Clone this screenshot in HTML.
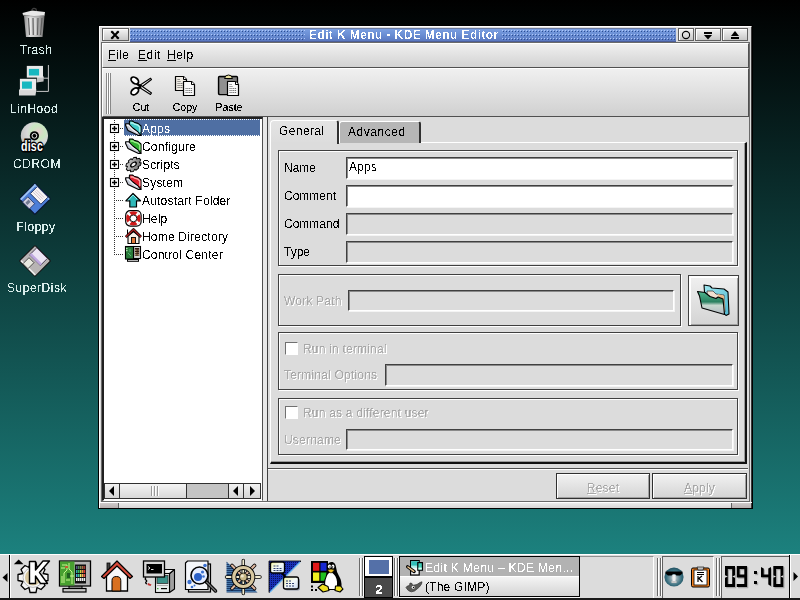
<!DOCTYPE html>
<html><head><meta charset="utf-8">
<style>
*{margin:0;padding:0;box-sizing:border-box}
html,body{width:800px;height:600px;overflow:hidden}
body{position:relative;background:linear-gradient(to bottom,#000 0px,#1c817e 554px);font-family:"Liberation Sans",sans-serif;font-size:12px;color:#000}
.a{position:absolute}
.dl{position:absolute;color:#d8ecea;font-size:12px;white-space:nowrap;text-align:center;width:80px;line-height:14px;letter-spacing:0.5px;filter:url(#crisp)}
.win{position:absolute;left:99px;top:26px;width:653px;height:482px;background:#dcdcdc;border-left:1px solid #fff;border-top:1px solid #fff;border-right:1px solid #000;border-bottom:1px solid #000}
.tb{position:absolute;background:linear-gradient(#f4f4f4,#c8c8c8);border:1px solid #555}
.t{position:absolute;white-space:nowrap;line-height:14px;letter-spacing:0.2px;filter:url(#crisp)}
.grad{background:linear-gradient(#ececec,#d4d4d4)}
.fld{position:absolute;border-top:1px solid #404040;border-left:1px solid #404040;border-bottom:1px solid #fff;border-right:1px solid #fff;background:#dcdcdc;box-shadow:inset 1px 1px 0 #8a8a8a,1px 1px 0 #f4f4f4}
.fld.w{background:#fff}
.grp{position:absolute;border:1px solid #404040;box-shadow:inset 1px 1px 0 #fff,1px 1px 0 #fff}
.dis{color:#a8a8a8;text-shadow:1px 1px 0 #fff}
</style></head><body>
<svg width="0" height="0" style="position:absolute"><filter id="crisp" x="0" y="0" width="100%" height="100%"><feComponentTransfer><feFuncA type="discrete" tableValues="0 0 1 1"/></feComponentTransfer></filter><filter id="crisp2" x="0" y="0" width="100%" height="100%"><feComponentTransfer><feFuncA type="discrete" tableValues="0 1 1"/></feComponentTransfer></filter><filter id="crisp3" x="0" y="0" width="100%" height="100%"><feComponentTransfer><feFuncA type="discrete" tableValues="0 0 0 1 1"/></feComponentTransfer></filter><filter id="crisp4" x="0" y="0" width="100%" height="100%"><feComponentTransfer><feFuncA type="discrete" tableValues="0 0 1 1 1"/></feComponentTransfer></filter></svg>


<!-- desktop icons -->
<svg class="a" style="left:19px;top:4px" width="30" height="36" viewBox="0 0 30 36">
<defs><linearGradient id="tg" x1="0" x2="1"><stop offset="0" stop-color="#909090"/><stop offset="0.3" stop-color="#e0e0e0"/><stop offset="0.7" stop-color="#b0b0b0"/><stop offset="1" stop-color="#707070"/></linearGradient></defs>
<path d="M5 12 L25.5 12 L23.5 33 L7 33 Z" fill="url(#tg)"/>
<path d="M9.5 14 L10.5 31 M14 14 L14.3 31 M19 14 L18.5 31 M23 14 L21.5 31" stroke="#606060" stroke-width="1.2"/><path d="M11 14 L11.8 31 M16 14 L16.2 31" stroke="#f0f0f0" stroke-width="0.8"/>
<path d="M3.5 9 L13 6.5 L26 8 L25.5 11.5 L15 12.5 L4 11 Z" fill="#e8e8e8"/>
<path d="M4 11 L15 12.5 L25.5 11.5" stroke="#a0a0a0" stroke-width="0.8" fill="none"/>
<path d="M12.5 6.5 Q14.5 3 17 5 L17.5 7" stroke="#404040" stroke-width="1.2" fill="none"/>
</svg>

<svg class="a" style="left:16px;top:62px" width="36" height="36" viewBox="0 0 36 36">
<path d="M32.4 3 L32.4 29.4 L20.4 29.4 M27.6 16.2 L32.4 16.2" stroke="#c8c8c8" stroke-width="1" fill="none"/>
<path d="M21 14.5 L28 14.5 L27.5 19.5 L20.5 20.5 Z" fill="#c0c0c0"/>
<rect x="10.8" y="3.9" width="16.2" height="11.7" fill="#e8e8e8"/>
<rect x="12.9" y="6.9" width="10.2" height="6.6" fill="#18b8c0"/>
<path d="M3 27.6 L20.4 27.6 L19.5 33.6 L3 33.6 Z" fill="#d8d8d8"/>
<rect x="3.9" y="16.8" width="16.2" height="11.4" fill="#ececec"/>
<rect x="6" y="19.5" width="9.9" height="7.2" fill="#18b8c0"/>
</svg>

<svg class="a" style="left:17px;top:119px" width="36" height="36" viewBox="0 0 36 36">
<defs><radialGradient id="cdg" cx="0.65" cy="0.35" r="0.7"><stop offset="0" stop-color="#e8d0d0"/><stop offset="0.35" stop-color="#c8e8c0"/><stop offset="0.6" stop-color="#d8d8d8"/><stop offset="1" stop-color="#c0c0c0"/></radialGradient></defs>
<circle cx="17.4" cy="16.8" r="13.6" fill="url(#cdg)"/>
<circle cx="17.4" cy="16.8" r="4.6" fill="#000"/>
<circle cx="17.4" cy="16.8" r="2.4" fill="none" stroke="#fff" stroke-width="0.9"/>
<g transform="translate(15,31.8) scale(0.85,1.15)"><text x="0" y="0" text-anchor="middle" font-family="Liberation Sans" font-weight="bold" font-size="12.5" fill="#fff" stroke="#000" stroke-width="2.4" paint-order="stroke" letter-spacing="0.2">disc</text></g>
</svg>

<svg class="a" style="left:17px;top:181px" width="36" height="36" viewBox="0 0 36 36">
<g transform="translate(17.9,17.9) rotate(45)">
<rect x="-11" y="-11" width="22" height="22" rx="1" fill="#4c7ed8" stroke="#0a1830" stroke-width="1.2"/>
<rect x="-10.5" y="-10.5" width="1.8" height="21" fill="#a0c4f4"/><rect x="-10.5" y="-10.5" width="21" height="1.5" fill="#90b8f0"/>
<rect x="-7" y="-10.5" width="15" height="10" fill="#f8f4f4" stroke="#203060" stroke-width="0.9"/>
<path d="M-6 -7.5 L5.5 -7.5 M-6 -5.5 L5.5 -5.5 M-6 -3.5 L5.5 -3.5" stroke="#c0a8b8" stroke-width="0.6"/>
<rect x="-6.5" y="3.6" width="9.7" height="7.4" fill="#d0d0e0" stroke="#203060" stroke-width="0.8"/>
<rect x="-4" y="5" width="3" height="4.5" fill="#707890"/>
</g>
</svg>

<svg class="a" style="left:17px;top:243px" width="36" height="36" viewBox="0 0 36 36">
<g transform="translate(18,17.9) rotate(45)">
<rect x="-11" y="-11" width="22" height="22" rx="1" fill="#b8b4b4" stroke="#101010" stroke-width="1"/>
<rect x="-10" y="9" width="20" height="1.5" fill="#f0f0f0"/>
<rect x="-8" y="-10.5" width="15" height="10" fill="#ece4f4" stroke="#302840" stroke-width="0.8"/>
<rect x="-8" y="-3" width="15" height="2.5" fill="#c0a8e0"/>
<rect x="-6.5" y="2" width="7" height="8.5" fill="#e8e8e0" stroke="#202020" stroke-width="0.7"/>
</g>
</svg>

<!-- desktop labels -->
<div class="dl" style="left:-4px;top:43px">Trash</div>
<div class="dl" style="left:-6px;top:102px">LinHood</div>
<div class="dl" style="left:-3px;top:157px">CDROM</div>
<div class="dl" style="left:-4px;top:220px">Floppy</div>
<div class="dl" style="left:-3px;top:281px">SuperDisk</div>

<!-- window -->

<!-- window frame -->
<div class="a" style="left:98px;top:25px;width:655px;height:484px;background:#000"></div>
<div class="a" style="left:99px;top:26px;width:653px;height:482px;background:#dcdcdc;border-left:1px solid #fff;border-top:1px solid #fff;border-right:1px solid #3a3a3a"></div>
<!-- grips bottom -->
<div class="a" style="left:99px;top:502px;width:653px;height:1px;background:#fff"></div>
<div class="a" style="left:100px;top:503px;width:651px;height:5px;background:linear-gradient(#ececec,#d8d6d6)"></div>
<div class="a" style="left:100px;top:503px;width:18px;height:5px;background:linear-gradient(#d0cccc,#b8b0b0)"></div>
<div class="a" style="left:732px;top:503px;width:19px;height:5px;background:linear-gradient(#d0cccc,#b8b0b0)"></div>
<div class="a" style="left:118px;top:503px;width:1px;height:5px;background:#606060"></div>
<div class="a" style="left:731px;top:503px;width:1px;height:5px;background:#606060"></div>
<!-- title row -->
<div class="tb" style="left:102px;top:28px;width:27px;height:13px;border-color:#606060;box-shadow:inset 1px 1px 0 #fff"></div>
<svg class="a" style="left:109px;top:29px" width="12" height="11" viewBox="0 0 12 11"><path d="M3 3 L9 9 M9 3 L3 9" stroke="#000" stroke-width="2" stroke-linecap="square"/><path d="M2.5 2.5 h2 v1 h-2z M7.5 2.5 h2 v1 h-2z M2.5 8.5 h2 v1 h-2z M7.5 8.5 h2 v1 h-2z" fill="#000"/></svg>
<div class="a" style="left:130px;top:28px;width:546px;height:14px;background:linear-gradient(#7a9ee0,#6a8ed4 50%,#5a78c0);border-top:1px solid #6a7aa0;border-bottom:1px solid #4c5e98"></div>
<svg class="a" style="left:130px;top:28px" width="546" height="14"><defs><pattern id="dots" x="0" y="0" width="3" height="4" patternUnits="userSpaceOnUse"><rect x="1" y="3" width="1" height="1" fill="#2c4c90"/><rect x="0" y="2" width="1" height="1" fill="#b0c8f8"/></pattern></defs><rect y="1" width="546" height="12" fill="url(#dots)"/></svg>
<div class="a" style="left:305px;top:29px;width:197px;height:12px;background:linear-gradient(#7a9ee0,#6a8ed4 50%,#5a78c0)"></div>
<div class="t" style="left:309px;top:28px;color:#fff;font-weight:bold;font-size:12px;letter-spacing:0.4px;filter:url(#crisp3)">Edit K Menu - KDE Menu Editor</div>
<div class="tb" style="left:678px;top:28px;width:16px;height:13px;border-color:#606060;box-shadow:inset 1px 1px 0 #fff"></div>
<svg class="a" style="left:681px;top:30px" width="10" height="10"><circle cx="5" cy="5" r="3.6" fill="none" stroke="#000" stroke-width="1.1"/></svg>
<div class="tb" style="left:695px;top:28px;width:26px;height:13px;border-color:#606060;box-shadow:inset 1px 1px 0 #fff"></div>
<svg class="a" style="left:701px;top:30px" width="14" height="10"><rect x="3" y="2" width="8" height="2" fill="#000"/><path d="M3 5 L11 5 L7 9.5 Z" fill="#000"/></svg>
<div class="tb" style="left:722px;top:28px;width:26px;height:13px;border-color:#606060;box-shadow:inset 1px 1px 0 #fff"></div>
<svg class="a" style="left:728px;top:30px" width="14" height="10"><path d="M3 6 L11 6 L7 1 Z" fill="#000"/><rect x="3" y="7" width="8" height="2" fill="#000"/></svg>

<!-- client frame -->
<div class="a" style="left:101px;top:42px;width:649px;height:460px;border:1px solid #6a6a6a;border-right-color:#6a6a6a;border-bottom-color:#6a6a6a"></div>

<!-- menubar -->
<div class="a grad" style="left:102px;top:43px;width:647px;height:25px;border-top:1px solid #fff;border-left:1px solid #fff;border-bottom:1px solid #505050;border-right:1px solid #505050;background:linear-gradient(#f0f0f0,#d2d2d2)"></div>
<div class="t" style="left:108px;top:48px;letter-spacing:0.5px"><u>F</u>ile</div>
<div class="t" style="left:138px;top:48px;letter-spacing:0.5px"><u>E</u>dit</div>
<div class="t" style="left:167px;top:48px;letter-spacing:0.5px"><u>H</u>elp</div>

<!-- toolbar -->
<div class="a" style="left:102px;top:68px;width:647px;height:49px;border-top:1px solid #fff;border-left:1px solid #fff;border-bottom:1px solid #505050;border-right:1px solid #505050;background:linear-gradient(#f0f0f0,#d0d0d0)"></div>
<div class="a" style="left:106px;top:73px;width:1px;height:41px;background:#888"></div>
<div class="a" style="left:107px;top:73px;width:1px;height:41px;background:#fff"></div>
<div class="a" style="left:108px;top:73px;width:1px;height:41px;background:#888"></div>
<div class="a" style="left:109px;top:73px;width:1px;height:41px;background:#fff"></div>
<div class="a" style="left:110px;top:73px;width:1px;height:41px;background:#888"></div>
<div class="t" style="left:121px;top:100px;width:40px;text-align:center;font-size:10.5px;letter-spacing:0;filter:url(#crisp4)">Cut</div>
<div class="t" style="left:165px;top:100px;width:40px;text-align:center;font-size:10.5px;letter-spacing:0;filter:url(#crisp4)">Copy</div>
<div class="t" style="left:209px;top:100px;width:40px;text-align:center;font-size:10.5px;letter-spacing:0;filter:url(#crisp4)">Paste</div>


<!-- toolbar icons -->
<svg class="a" style="left:126px;top:72px" width="30" height="28" viewBox="0 0 30 28">
<path d="M13.5 13.5 L24.5 6.2 L25.5 7.5 L15 15.5 Z" fill="#fff" stroke="#000" stroke-width="1.1" stroke-linejoin="round"/>
<path d="M13.5 15.5 L24.5 22.5 L25.5 21 L15 13.5 Z" fill="#fff" stroke="#000" stroke-width="1.1" stroke-linejoin="round"/>
<path d="M15 14.5 L10.5 11.5" stroke="#000" stroke-width="2.5"/>
<path d="M15 14.5 L10.5 17.5" stroke="#000" stroke-width="2.5"/>
<ellipse cx="8.8" cy="8.5" rx="4.2" ry="2.8" transform="rotate(38 8.8 8.5)" fill="#fff" stroke="#000" stroke-width="1.8"/>
<ellipse cx="8.8" cy="19.4" rx="4.2" ry="2.8" transform="rotate(-38 8.8 19.4)" fill="#fff" stroke="#000" stroke-width="1.8"/>
</svg>
<svg class="a" style="left:170px;top:72px" width="30" height="28" viewBox="0 0 30 28">
<path d="M5.5 4.5 L13.5 4.5 L16.5 7.5 L16.5 18.5 L5.5 18.5 Z" fill="#f0ece4" stroke="#000" stroke-width="1.2" stroke-linejoin="round"/>
<path d="M13.5 4.5 L13.5 7.5 L16.5 7.5" fill="#fff" stroke="#000" stroke-width="1"/>
<path d="M7.5 7.5 H10 M7.5 9.5 H10.5 M7.5 11.5 H14.5 M7.5 13.5 H14.5 M7.5 15.5 H14.5" stroke="#505050" stroke-width="0.8" stroke-dasharray="1.2 0.6"/>
<path d="M13.5 9.5 L21.5 9.5 L24.5 12.5 L24.5 23.5 L13.5 23.5 Z" fill="#fafafa" stroke="#000" stroke-width="1.2" stroke-linejoin="round"/>
<path d="M21.5 9.5 L21.5 12.5 L24.5 12.5" fill="#fff" stroke="#000" stroke-width="1"/>
<path d="M15.5 16.5 H22.5 M15.5 18.5 H22.5 M15.5 20.5 H22.5" stroke="#505050" stroke-width="0.8" stroke-dasharray="1.2 0.6"/>
</svg>
<svg class="a" style="left:214px;top:72px" width="30" height="28" viewBox="0 0 30 28">
<rect x="4.5" y="4.5" width="19" height="18" rx="1" fill="#7a7a7a" stroke="#000" stroke-width="1.3"/>
<rect x="6" y="6" width="7" height="16" fill="#909090"/>
<path d="M10.5 6.5 Q11 3 14.5 3 Q18 3 18.5 6.5 Z" fill="#e8e0a0" stroke="#000" stroke-width="1"/>
<path d="M13.5 9.5 L21.5 9.5 L24.5 12.5 L24.5 23.5 L13.5 23.5 Z" fill="#fafafa" stroke="#000" stroke-width="1.2" stroke-linejoin="round"/>
<path d="M21.5 9.5 L21.5 12.5 L24.5 12.5" fill="#fff" stroke="#000" stroke-width="1"/>
<path d="M15.5 12.5 H18 M15.5 14.5 H18.5 M15.5 16.5 H22.5 M15.5 18.5 H22.5 M15.5 20.5 H22.5" stroke="#505050" stroke-width="0.8" stroke-dasharray="1.2 0.6"/>
</svg>

<!-- tree view -->
<div class="a" style="left:102px;top:117px;width:161px;height:384px;background:#fff;border-top:2px solid #202020;border-left:2px solid #202020;border-right:1px solid #505050;border-bottom:1px solid #fff"></div>
<div class="a" style="left:124px;top:119px;width:136px;height:17px;background:#4f6fa3"></div>
<div class="a" style="left:124px;top:119px;width:136px;height:1px;background:repeating-linear-gradient(90deg,#fff 0 1px,#4f6fa3 1px 2px)"></div><div class="a" style="left:124px;top:135px;width:136px;height:1px;background:repeating-linear-gradient(90deg,#fff 0 1px,#4f6fa3 1px 2px)"></div>
<div class="t" style="left:142px;top:122px;color:#fff">Apps</div>
<div class="t" style="left:142px;top:140px">Configure</div>
<div class="t" style="left:142px;top:158px">Scripts</div>
<div class="t" style="left:142px;top:176px">System</div>
<div class="t" style="left:142px;top:194px">Autostart Folder</div>
<div class="t" style="left:142px;top:212px">Help</div>
<div class="t" style="left:142px;top:230px">Home Directory</div>
<div class="t" style="left:142px;top:248px">Control Center</div>


<!-- tree lines & icons -->
<svg class="a" style="left:104px;top:119px" width="40" height="144" viewBox="0 0 40 144">
<g fill="#303030">
<rect x="10" y="1" width="1" height="1"/><rect x="10" y="3" width="1" height="1"/><rect x="10" y="15" width="1" height="1"/><rect x="10" y="17" width="1" height="1"/><rect x="10" y="19" width="1" height="1"/><rect x="10" y="21" width="1" height="1"/><rect x="10" y="33" width="1" height="1"/><rect x="10" y="35" width="1" height="1"/><rect x="10" y="37" width="1" height="1"/><rect x="10" y="39" width="1" height="1"/><rect x="10" y="51" width="1" height="1"/><rect x="10" y="53" width="1" height="1"/><rect x="10" y="55" width="1" height="1"/><rect x="10" y="57" width="1" height="1"/><rect x="10" y="69" width="1" height="1"/><rect x="10" y="71" width="1" height="1"/><rect x="10" y="73" width="1" height="1"/><rect x="10" y="75" width="1" height="1"/><rect x="10" y="77" width="1" height="1"/><rect x="10" y="79" width="1" height="1"/><rect x="10" y="81" width="1" height="1"/><rect x="10" y="83" width="1" height="1"/><rect x="10" y="85" width="1" height="1"/><rect x="10" y="87" width="1" height="1"/><rect x="10" y="89" width="1" height="1"/><rect x="10" y="91" width="1" height="1"/><rect x="10" y="93" width="1" height="1"/><rect x="10" y="95" width="1" height="1"/><rect x="10" y="97" width="1" height="1"/><rect x="10" y="99" width="1" height="1"/><rect x="10" y="101" width="1" height="1"/><rect x="10" y="103" width="1" height="1"/><rect x="10" y="105" width="1" height="1"/><rect x="10" y="107" width="1" height="1"/><rect x="10" y="109" width="1" height="1"/><rect x="10" y="111" width="1" height="1"/><rect x="10" y="113" width="1" height="1"/><rect x="10" y="115" width="1" height="1"/><rect x="10" y="117" width="1" height="1"/><rect x="10" y="119" width="1" height="1"/><rect x="10" y="121" width="1" height="1"/><rect x="10" y="123" width="1" height="1"/><rect x="10" y="125" width="1" height="1"/><rect x="10" y="127" width="1" height="1"/><rect x="10" y="129" width="1" height="1"/><rect x="10" y="131" width="1" height="1"/><rect x="10" y="133" width="1" height="1"/><rect x="10" y="135" width="1" height="1"/><rect x="16" y="9" width="1" height="1"/><rect x="18" y="9" width="1" height="1"/><rect x="16" y="27" width="1" height="1"/><rect x="18" y="27" width="1" height="1"/><rect x="16" y="45" width="1" height="1"/><rect x="18" y="45" width="1" height="1"/><rect x="16" y="63" width="1" height="1"/><rect x="18" y="63" width="1" height="1"/><rect x="12" y="81" width="1" height="1"/><rect x="14" y="81" width="1" height="1"/><rect x="16" y="81" width="1" height="1"/><rect x="18" y="81" width="1" height="1"/><rect x="12" y="99" width="1" height="1"/><rect x="14" y="99" width="1" height="1"/><rect x="16" y="99" width="1" height="1"/><rect x="18" y="99" width="1" height="1"/><rect x="12" y="117" width="1" height="1"/><rect x="14" y="117" width="1" height="1"/><rect x="16" y="117" width="1" height="1"/><rect x="18" y="117" width="1" height="1"/><rect x="12" y="135" width="1" height="1"/><rect x="14" y="135" width="1" height="1"/><rect x="16" y="135" width="1" height="1"/><rect x="18" y="135" width="1" height="1"/></g>
<rect x="6.5" y="5.5" width="8" height="8" fill="#fff" stroke="#000" stroke-width="1.1"/><path d="M8 9.5 H13 M10.5 7 V12" stroke="#000" stroke-width="1.4"/>
<rect x="6.5" y="23.5" width="8" height="8" fill="#fff" stroke="#000" stroke-width="1.1"/><path d="M8 27.5 H13 M10.5 25 V30" stroke="#000" stroke-width="1.4"/>
<rect x="6.5" y="41.5" width="8" height="8" fill="#fff" stroke="#000" stroke-width="1.1"/><path d="M8 45.5 H13 M10.5 43 V48" stroke="#000" stroke-width="1.4"/>
<rect x="6.5" y="59.5" width="8" height="8" fill="#fff" stroke="#000" stroke-width="1.1"/><path d="M8 63.5 H13 M10.5 61 V66" stroke="#000" stroke-width="1.4"/>
</svg>
<svg class="a" style="left:125px;top:120px" width="17" height="17" viewBox="0 0 17 17">
<path d="M4.5 1 L7.5 1 L9 2.2 L13 3.4 L16 6 L16 15.5 L4 8 Z" fill="#40c8c8" stroke="#000" stroke-width="1.1" stroke-linejoin="round"/>
<path d="M5.5 3 L8 3 L9.5 4.2 L13 5.2 L14.8 7 L14.8 12" stroke="#b8f4f4" stroke-width="1.3" fill="none"/>
<path d="M0.6 3.8 L3.8 3.8 L7.5 7.8 L13 12 L15.8 15.5 L13.5 15.5 L3 10.5 L0.6 5.5 Z" fill="#c4c8d4" stroke="#000" stroke-width="1.1" stroke-linejoin="round"/>
<path d="M2 5.4 L3.5 5.4 L7.5 9.5 L12.5 13" stroke="#f4f4f8" stroke-width="1.2" fill="none"/>
</svg>
<svg class="a" style="left:125px;top:138px" width="17" height="17" viewBox="0 0 17 17">
<path d="M4.5 1 L7.5 1 L9 2.2 L13 3.4 L16 6 L16 15.5 L4 8 Z" fill="#30b030" stroke="#000" stroke-width="1.1" stroke-linejoin="round"/>
<path d="M5.5 3 L8 3 L9.5 4.2 L13 5.2 L14.8 7 L14.8 12" stroke="#a0f090" stroke-width="1.3" fill="none"/>
<path d="M0.6 3.8 L3.8 3.8 L7.5 7.8 L13 12 L15.8 15.5 L13.5 15.5 L3 10.5 L0.6 5.5 Z" fill="#c4c8d4" stroke="#000" stroke-width="1.1" stroke-linejoin="round"/>
<path d="M2 5.4 L3.5 5.4 L7.5 9.5 L12.5 13" stroke="#f4f4f8" stroke-width="1.2" fill="none"/>
</svg>
<svg class="a" style="left:125px;top:156px" width="17" height="17" viewBox="0 0 17 17">
<defs><linearGradient id="gg" x1="0" y1="0" x2="1" y2="1"><stop offset="0" stop-color="#d8d8d8"/><stop offset="0.5" stop-color="#a0a0a0"/><stop offset="1" stop-color="#606060"/></linearGradient></defs>
<g transform="translate(8.5,8.5) rotate(-40) scale(1,0.72)">
<path d="M-1.6,-8.4 L1.6,-8.4 L2.3,-6.3 L4.7,-7.3 L6.9,-5.2 L6,-3.1 L8.4,-1.6 L8.4,1.6 L6,3.1 L6.9,5.2 L4.7,7.3 L2.3,6.3 L1.6,8.4 L-1.6,8.4 L-2.3,6.3 L-4.7,7.3 L-6.9,5.2 L-6,3.1 L-8.4,1.6 L-8.4,-1.6 L-6,-3.1 L-6.9,-5.2 L-4.7,-7.3 L-2.3,-6.3 Z" fill="url(#gg)" stroke="#000" stroke-width="1.1"/>
<ellipse rx="3.2" ry="2.6" fill="#f0f0f0" stroke="#000" stroke-width="1.5"/>
</g></svg>
<svg class="a" style="left:125px;top:174px" width="17" height="17" viewBox="0 0 17 17">
<path d="M4.5 1 L7.5 1 L9 2.2 L13 3.4 L16 6 L16 15.5 L4 8 Z" fill="#e02030" stroke="#000" stroke-width="1.1" stroke-linejoin="round"/>
<path d="M5.5 3 L8 3 L9.5 4.2 L13 5.2 L14.8 7 L14.8 12" stroke="#ffb0b0" stroke-width="1.3" fill="none"/>
<path d="M0.6 3.8 L3.8 3.8 L7.5 7.8 L13 12 L15.8 15.5 L13.5 15.5 L3 10.5 L0.6 5.5 Z" fill="#c4c8d4" stroke="#000" stroke-width="1.1" stroke-linejoin="round"/>
<path d="M2 5.4 L3.5 5.4 L7.5 9.5 L12.5 13" stroke="#f4f4f8" stroke-width="1.2" fill="none"/>
</svg>
<svg class="a" style="left:125px;top:192px" width="17" height="17" viewBox="0 0 17 17">
<path d="M0.8 8.8 L8 1.5 L15.5 8.8 L11.5 8.8 L11.5 15 L4.8 15 L4.8 8.8 Z" fill="#30b8b8" stroke="#000" stroke-width="1.2" stroke-linejoin="round"/>
<path d="M3 8.5 L8 3 L12 7" stroke="#90f0f0" stroke-width="1" fill="none"/>
</svg>
<svg class="a" style="left:125px;top:210px" width="17" height="17" viewBox="0 0 17 17">
<rect x="0.7" y="0.7" width="15.4" height="15.4" rx="4.5" fill="#fff" stroke="#000" stroke-width="1.2"/>
<circle cx="8.4" cy="8.4" r="5.4" fill="none" stroke="#d01818" stroke-width="3.6"/>
<g stroke="#fff" stroke-width="2.4"><path d="M3.2 3.2 L5.4 5.4 M13.6 3.2 L11.4 5.4 M3.2 13.6 L5.4 11.4 M13.6 13.6 L11.4 11.4"/></g>
<circle cx="8.4" cy="8.4" r="3.4" fill="#fff" stroke="#000" stroke-width="0.9"/>
</svg>
<svg class="a" style="left:125px;top:228px" width="17" height="17" viewBox="0 0 17 17">
<path d="M3 8 L8.5 3.5 L14 8 L14 15.5 L3 15.5 Z" fill="#f8f0e8" stroke="#000" stroke-width="1.1"/>
<path d="M0.8 9 L8.5 1.5 L16 9" stroke="#000" stroke-width="2.6" fill="none" stroke-linejoin="round"/>
<path d="M0.8 9 L8.5 1.5 L16 9" stroke="#b02020" stroke-width="1.3" fill="none" stroke-linejoin="round"/>
<path d="M2.5 1.5 V6" stroke="#000" stroke-width="1"/>
<rect x="6.5" y="9.5" width="4" height="6" fill="#e07838" stroke="#000" stroke-width="0.9"/>
</svg>
<svg class="a" style="left:122px;top:244px" width="22" height="22" viewBox="0 0 22 22">
<rect x="5.5" y="15.5" width="11" height="1.8" fill="#e8e8e8" stroke="#000" stroke-width="1"/>
<rect x="11.5" y="2.5" width="7" height="12" fill="#d8d8d8" stroke="#000" stroke-width="1.1"/>
<rect x="12.8" y="4" width="4.4" height="8" fill="#301810"/>
<g fill="#f0d0a0"><rect x="13.2" y="5.5" width="1.3" height="1.3"/><rect x="15.5" y="5.5" width="1.3" height="1.3" fill="#a08060"/><rect x="13.2" y="8" width="1.3" height="1.3"/><rect x="15.5" y="8" width="1.3" height="1.3" fill="#a08060"/><rect x="13.2" y="10.2" width="1.3" height="1.3"/><rect x="15.5" y="10.2" width="1.3" height="1.3"/></g>
<rect x="3.5" y="2.5" width="8" height="12.5" fill="#2a7a3a" stroke="#000" stroke-width="1.1"/>
<circle cx="4.8" cy="4.5" r="0.8" fill="#c0f0c0"/><circle cx="4.8" cy="6.6" r="0.8" fill="#c0f0c0"/>
<path d="M6 9 L9 12 M8 5 L8 8" stroke="#60c080" stroke-width="0.9"/>
</svg>

<!-- splitter -->
<div class="a" style="left:263px;top:117px;width:5px;height:384px;background:#e8e8e8;border-right:1px solid #404040"></div>

<!-- right panel -->
<div class="a" style="left:268px;top:117px;width:481px;height:384px;background:#dcdcdc"></div>
<!-- tab page -->
<div class="a" style="left:270px;top:142px;width:477px;height:322px;border-left:1px solid #fff;border-top:1px solid #fff;border-right:2px solid #101010;border-bottom:2px solid #101010;box-shadow:inset -1px -1px 0 #9a9a9a"></div>
<!-- advanced tab -->
<div class="a" style="left:339px;top:121px;width:82px;height:22px;background:#b6b6b6;border-top:1px solid #fff;border-left:1px solid #fff;border-right:2px solid #303030;border-radius:3px 3px 0 0"></div>
<div class="t" style="left:348px;top:125px;letter-spacing:0.55px">Advanced</div>
<!-- general tab -->
<div class="a" style="left:270px;top:120px;width:69px;height:24px;background:linear-gradient(#e4e4e4,#dcdcdc);border-top:1px solid #fff;border-left:1px solid #fff;border-right:2px solid #303030;border-radius:4px 3px 0 0"></div>
<div class="a" style="left:271px;top:142px;width:66px;height:2px;background:#dcdcdc"></div>
<div class="t" style="left:279px;top:124px;letter-spacing:0.4px">General</div>

<!-- group 1 -->
<div class="grp" style="left:278px;top:150px;width:460px;height:116px"></div>
<div class="t" style="left:284px;top:161px;letter-spacing:0">Name</div>
<div class="t" style="left:284px;top:189px;letter-spacing:0">Comment</div>
<div class="t" style="left:284px;top:217px;letter-spacing:0">Command</div>
<div class="t" style="left:284px;top:245px;letter-spacing:0">Type</div>
<div class="fld w" style="left:346px;top:157px;width:387px;height:22px"></div>
<div class="t" style="left:349px;top:160px">Apps</div>
<div class="fld w" style="left:346px;top:185px;width:387px;height:22px"></div>
<div class="fld" style="left:346px;top:213px;width:387px;height:22px"></div>
<div class="fld" style="left:346px;top:241px;width:387px;height:22px"></div>

<!-- group work path -->
<div class="grp" style="left:278px;top:274px;width:403px;height:52px"></div>
<div class="t dis" style="left:284px;top:294px">Work Path</div>
<div class="fld" style="left:348px;top:290px;width:326px;height:21px"></div>
<div class="a" style="left:688px;top:275px;width:51px;height:51px;border:1px solid #404040;box-shadow:inset 2px 2px 0 #fff,inset -1px -1px 0 #a0a0a0;background:linear-gradient(#f0f0f0,#d4d4d4)"></div>

<svg class="a" style="left:680px;top:270px" width="60" height="56" viewBox="0 0 60 56">
<defs><linearGradient id="fflap" x1="0" y1="0" x2="0" y2="1"><stop offset="0" stop-color="#50b890"/><stop offset="0.45" stop-color="#2a8060"/><stop offset="0.6" stop-color="#c8d8d0"/><stop offset="1" stop-color="#b0b8c0"/></linearGradient>
<linearGradient id="fback" x1="0" y1="0" x2="1" y2="1"><stop offset="0" stop-color="#a0e8f0"/><stop offset="1" stop-color="#50b8d0"/></linearGradient></defs>
<path d="M24 15 L30 16 L32 18 L44 19 L48 22 L49 44 L46 45.5 L24.5 22 Z" fill="url(#fback)" stroke="#000" stroke-width="1.1" stroke-linejoin="round"/>
<path d="M27 21 L33 21 L36 24 L44 25 L45 42 L28 34 Z" fill="#f0e0d0" stroke="#303030" stroke-width="0.7"/>
<path d="M38 24 L44 26 L45 42 L40 40 Z" fill="#e8b888"/>
<path d="M17.5 21.5 L25 22.5 L30 26.5 L36 28.5 L38 27 L43 29 L44.5 44.5 L22 38 L19.5 26 Z" fill="url(#fflap)" stroke="#000" stroke-width="1.1" stroke-linejoin="round"/>
</svg>

<!-- group run in terminal -->
<div class="grp" style="left:278px;top:332px;width:460px;height:58px"></div>
<div class="a" style="left:285px;top:342px;width:13px;height:13px;border-top:1px solid #707070;border-left:1px solid #707070;border-right:1px solid #fff;border-bottom:1px solid #fff;background:#fff"></div>
<div class="t dis" style="left:303px;top:342px">Run in terminal</div>
<div class="t dis" style="left:284px;top:368px">Terminal Options</div>
<div class="fld" style="left:385px;top:364px;width:348px;height:22px"></div>

<!-- group run as user -->
<div class="grp" style="left:278px;top:398px;width:460px;height:57px"></div>
<div class="a" style="left:285px;top:406px;width:13px;height:13px;border-top:1px solid #707070;border-left:1px solid #707070;border-right:1px solid #fff;border-bottom:1px solid #fff;background:#fff"></div>
<div class="t dis" style="left:303px;top:406px">Run as a different user</div>
<div class="t dis" style="left:284px;top:433px">Username</div>
<div class="fld" style="left:346px;top:429px;width:387px;height:21px"></div>

<!-- separator -->
<div class="a" style="left:268px;top:468px;width:480px;height:1px;background:#505050"></div>
<div class="a" style="left:268px;top:469px;width:480px;height:1px;background:#fff"></div>

<!-- buttons -->
<div class="a" style="left:556px;top:473px;width:94px;height:26px;border:1px solid #303030;box-shadow:inset 1px 1px 0 #fff,inset -1px -1px 0 #a0a0a0;background:linear-gradient(#f2f2f2,#d4d4d4)"></div>
<div class="t dis" style="left:556px;top:481px;width:94px;text-align:center"><u>R</u>eset</div>
<div class="a" style="left:652px;top:473px;width:95px;height:26px;border:1px solid #303030;box-shadow:inset 1px 1px 0 #fff,inset -1px -1px 0 #a0a0a0;background:linear-gradient(#f2f2f2,#d4d4d4)"></div>
<div class="t dis" style="left:652px;top:481px;width:95px;text-align:center"><u>A</u>pply</div>

<!-- scrollbar tree -->
<div class="a" style="left:104px;top:483px;width:157px;height:16px;background:#c4c4c4;border:1px solid #303030"></div>
<div class="a" style="left:105px;top:484px;width:15px;height:14px;background:linear-gradient(#f2f2f2,#d4d4d4);border-right:1px solid #303030"></div>
<svg class="a" style="left:108px;top:486px" width="8" height="10"><path d="M6 0 L6 10 L1 5 Z" fill="#000"/></svg>
<div class="a" style="left:120px;top:484px;width:67px;height:14px;background:linear-gradient(#f4f4f4,#d8d8d8);border-right:1px solid #303030"></div>
<div class="a" style="left:151px;top:486px;width:1px;height:10px;background:#999;box-shadow:1px 0 0 #fff"></div>
<div class="a" style="left:154px;top:486px;width:1px;height:10px;background:#999;box-shadow:1px 0 0 #fff"></div>
<div class="a" style="left:157px;top:486px;width:1px;height:10px;background:#999;box-shadow:1px 0 0 #fff"></div>
<div class="a" style="left:228px;top:484px;width:16px;height:14px;background:linear-gradient(#f2f2f2,#d4d4d4);border-left:1px solid #303030;border-right:1px solid #303030"></div>
<svg class="a" style="left:232px;top:486px" width="8" height="10"><path d="M6 0 L6 10 L1 5 Z" fill="#000"/></svg>
<div class="a" style="left:244px;top:484px;width:16px;height:14px;background:linear-gradient(#f2f2f2,#d4d4d4)"></div>
<svg class="a" style="left:249px;top:486px" width="8" height="10"><path d="M1 0 L1 10 L6 5 Z" fill="#000"/></svg>


<!-- ============ TASKBAR ============ -->
<div class="a" style="left:0;top:554px;width:800px;height:46px;background:#dcdcdc;border-top:1px solid #fff"></div>
<div class="a" style="left:0;top:598px;width:800px;height:2px;background:#1a1a1a"></div>
<!-- left hide -->
<div class="a" style="left:9px;top:555px;width:1px;height:43px;background:#000"></div>
<div class="a" style="left:10px;top:555px;width:1px;height:43px;background:#fff"></div>
<svg class="a" style="left:2px;top:573px" width="6" height="10"><path d="M5.5 0 L5.5 9 L0.5 4.5 Z" fill="#000"/></svg>
<!-- right hide -->
<div class="a" style="left:789px;top:555px;width:1px;height:43px;background:#000"></div>
<div class="a" style="left:790px;top:555px;width:1px;height:43px;background:#fff"></div>
<svg class="a" style="left:793px;top:572px" width="6" height="10"><path d="M0.5 0 L0.5 9 L5 4.5 Z" fill="#000"/></svg>

<!-- K menu -->
<svg class="a" style="left:10px;top:556px" width="42" height="42" viewBox="0 0 42 42">
<path d="M3.8 8.3 L8.7 3.6 L13.5 8.3 Z" fill="#000"/>
<g transform="translate(23,21.5)">
<path d="M-3,-15 L3,-15 L4,-10 L8,-12 L12,-8 L10,-4 L15,-3 L15,3 L10,4 L12,8 L8,12 L4,10 L3,15 L-3,15 L-4,10 L-8,12 L-12,8 L-10,4 L-15,3 L-15,-3 L-10,-4 L-12,-8 L-8,-12 L-4,-10 Z" fill="#f4f4f4" stroke="#000" stroke-width="1.3" stroke-linejoin="round"/>
<circle r="9" fill="#d8c8a0" stroke="#f8f8f8" stroke-width="1.8"/><circle r="9.9" fill="none" stroke="#909090" stroke-width="0.6"/>
</g>
<path d="M19.5 5.5 L25.5 5.5 L25.5 14 L33 5 L39.5 5 L29.5 16.5 L37.5 27.5 L30.5 27.5 L25.5 20 L25.5 27.5 L19.5 27.5 Z" fill="#fff" stroke="#000" stroke-width="1.4" stroke-linejoin="round"/>
</svg>

<!-- monitor (kcontrol) -->
<svg class="a" style="left:55px;top:556px" width="42" height="42" viewBox="0 0 42 42">
<rect x="14" y="29" width="13" height="4" fill="#909090" stroke="#000" stroke-width="1"/>
<rect x="8" y="32.5" width="23" height="3.5" fill="#c8c8c8" stroke="#000" stroke-width="1.2"/>
<rect x="4.5" y="5" width="31" height="25" fill="#b4b4b4" stroke="#000" stroke-width="1.3"/>
<rect x="20" y="8.5" width="11" height="19" fill="#101010"/>
<g fill="#3a8"><rect x="21" y="10" width="1.5" height="3" fill="#558"/><rect x="23" y="10" width="1.5" height="3" fill="#585"/><rect x="25" y="10" width="1.5" height="3" fill="#885"/><rect x="27" y="10" width="1.5" height="3" fill="#a64"/><rect x="29" y="10" width="1.2" height="3" fill="#a33"/>
<rect x="21" y="14" width="1.5" height="3" fill="#3aa"/><rect x="23" y="14" width="1.5" height="3" fill="#3b5"/><rect x="25" y="14" width="1.5" height="3" fill="#cc4"/><rect x="27" y="14" width="1.5" height="3" fill="#e84"/><rect x="29" y="14" width="1.2" height="3" fill="#d33"/>
<rect x="21" y="18" width="1.5" height="3" fill="#4ad"/><rect x="23" y="18" width="1.5" height="3" fill="#4c8"/><rect x="25" y="18" width="1.5" height="3" fill="#ee6"/><rect x="27" y="18" width="1.5" height="3" fill="#fa5"/><rect x="29" y="18" width="1.2" height="3" fill="#e55"/>
<rect x="21" y="22" width="1.5" height="3" fill="#eee"/><rect x="23" y="22" width="1.5" height="3" fill="#eee"/><rect x="25" y="22" width="1.5" height="3" fill="#eee"/><rect x="27" y="22" width="1.5" height="3" fill="#eee"/><rect x="29" y="22" width="1.2" height="3" fill="#eee"/></g>
<rect x="5" y="5.5" width="14.5" height="24" fill="#48a030"/>
<path d="M7 9 L12 9 L12 14 L9 17 L9 27 M14 7 L14 13 L17 16 L17 28 M7 20 L7 27 M6 12 L10 12 M15 20 L19 20 M11 24 L15 24" stroke="#c8f890" stroke-width="1" fill="none"/><rect x="12" y="17" width="3" height="5" fill="#206020"/>
<rect x="10" y="10" width="3" height="2" fill="#c06030"/>
</svg>

<!-- home -->
<svg class="a" style="left:97px;top:556px" width="42" height="42" viewBox="0 0 42 42">
<rect x="10" y="7" width="3" height="7" fill="#404040" stroke="#000" stroke-width="0.8"/>
<path d="M9.5 18 L20 8 L30.5 18 L30.5 35 L9.5 35 Z" fill="#f8f8f8" stroke="#000" stroke-width="1.3"/>
<path d="M4.5 20.5 L20 5 L35.5 20.5 L33 22.5 L20 10 L7 22.5 Z" fill="#d84a3a" stroke="#000" stroke-width="1.2" stroke-linejoin="round"/>
<path d="M15 35 L15 24.5 Q15 20.5 19.4 20.5 Q23.8 20.5 23.8 24.5 L23.8 35 Z" fill="#d87020" stroke="#000" stroke-width="1"/>
</svg>

<!-- terminal -->
<svg class="a" style="left:139px;top:556px" width="42" height="42" viewBox="0 0 42 42">
<path d="M30.5 17.5 L35.5 13.5 L35.5 33 L30.5 36.5 Z" fill="#a0a0a0" stroke="#000" stroke-width="1.1" stroke-linejoin="round"/>
<path d="M16.5 17.5 L21.5 13.5 L35.5 13.5 L30.5 17.5 Z" fill="#f4f4f4" stroke="#000" stroke-width="1.1" stroke-linejoin="round"/>
<rect x="16.5" y="17.5" width="14" height="19" fill="#e8ecec" stroke="#000" stroke-width="1.1"/>
<rect x="18" y="19.5" width="11" height="8" fill="#3a9088" stroke="#303030" stroke-width="0.8"/>
<rect x="18" y="29" width="11" height="1" fill="#b0b0b0"/>
<rect x="22" y="32" width="6" height="1.2" fill="#000"/>
<rect x="18" y="32" width="1.5" height="1.2" fill="#40a040"/>
<rect x="4.5" y="5" width="21" height="16" fill="#d8d8d8" stroke="#000" stroke-width="1.3"/>
<rect x="7.5" y="8" width="15.5" height="9.5" fill="#000"/>
<path d="M9 10.5 L11 12 L9 13.5 M12 13.5 L14.5 13.5" stroke="#fff" stroke-width="0.9" fill="none"/>
<path d="M7 21.5 Q5.5 23 7 24 Q8.5 25 7 26 Q6 27 8 28" stroke="#000" stroke-width="1.3" fill="none"/>
<path d="M9 27 L12.5 28.5 L11.5 30 L8.5 29 Z" fill="#c03030"/>
</svg>
<!-- kfind -->
<svg class="a" style="left:181px;top:556px" width="42" height="42" viewBox="0 0 42 42">
<rect x="7.5" y="8" width="22" height="28" fill="#c8c8c8" stroke="#000" stroke-width="1.2"/>
<path d="M4.5 7 L6.5 5 L27 5 L27 33.5 L4.5 33.5 Z" fill="#f4f6fa" stroke="#000" stroke-width="1.2"/>
<circle cx="24" cy="9.5" r="1.8" fill="#3a70d0"/><circle cx="8.5" cy="26" r="2.2" fill="#3a70d0"/><circle cx="11" cy="31" r="1.3" fill="#3a70d0"/><circle cx="13.5" cy="29.5" r="1" fill="#3a70d0"/>
<path d="M25.5 26 L34.5 35" stroke="#000" stroke-width="3.5" stroke-linecap="round"/>
<path d="M25.5 26 L34.5 35" stroke="#707070" stroke-width="1.5" stroke-linecap="round"/>
<circle cx="18.5" cy="19.5" r="8.5" fill="#e4ecff" stroke="#000" stroke-width="1.6"/>
<circle cx="17" cy="21" r="4" fill="#2a60c8"/><circle cx="21.5" cy="16" r="1.6" fill="#3a70d0"/><circle cx="22.5" cy="20.5" r="1.3" fill="#3a70d0"/>
</svg>

<!-- helm -->
<svg class="a" style="left:223px;top:556px" width="42" height="42" viewBox="0 0 42 42">
<defs><pattern id="hst" width="4" height="2" patternUnits="userSpaceOnUse"><rect width="4" height="1" fill="#1a3a6a"/><rect y="1" width="4" height="1" fill="#4a7aaa"/></pattern></defs>
<path d="M3.5 5.5 L3.5 36.5 L34.5 36.5 Z" fill="url(#hst)"/>
<g stroke-linecap="round">
<path d="M9 9.5 L31.5 32.5 M31.5 9.5 L9 32.5" stroke="#000" stroke-width="3.6"/>
<path d="M9 9.5 L31.5 32.5 M31.5 9.5 L9 32.5" stroke="#e0b8a0" stroke-width="2"/>
<path d="M20.3 4.5 L20.3 37.5 M3.5 21 L37 21" stroke="#000" stroke-width="3.4"/>
<path d="M20.3 4.5 L20.3 37.5 M3.5 21 L37 21" stroke="#f0ead0" stroke-width="1.8"/>
</g>
<circle cx="20.3" cy="21" r="9.5" fill="none" stroke="#000" stroke-width="5"/>
<circle cx="20.3" cy="21" r="9.5" fill="none" stroke="#d8c8a0" stroke-width="3.2"/>
<circle cx="20.3" cy="21" r="4" fill="#c8b888" stroke="#000" stroke-width="0.8"/>
<circle cx="19.3" cy="20" r="1.5" fill="#f0e8d0"/>
</svg>
<!-- knode -->
<svg class="a" style="left:265px;top:556px" width="42" height="42" viewBox="0 0 42 42">
<defs><pattern id="kn" width="2" height="2" patternUnits="userSpaceOnUse"><rect width="2" height="2" fill="#1830b8"/><rect width="1" height="1" fill="#081060"/></pattern>
<linearGradient id="bub" x1="0" y1="0" x2="1" y2="1"><stop offset="0" stop-color="#f0f0a0"/><stop offset="0.5" stop-color="#f4fafa"/><stop offset="1" stop-color="#c8d8f0"/></linearGradient></defs>
<path d="M4 5 L36 5 L4 36.5 Z" fill="url(#kn)" stroke="#000" stroke-width="0.8"/>
<path d="M35 6 L5 36" stroke="#60b0f0" stroke-width="1.2"/>
<path d="M17 17 L20.5 21" stroke="#000" stroke-width="2"/>
<rect x="5.5" y="6" width="14" height="11" rx="2" fill="url(#bub)" stroke="#000" stroke-width="1.3"/>
<g fill="#304070"><rect x="8.5" y="9.5" width="2" height="1"/><rect x="11.5" y="9.5" width="2" height="1"/><rect x="8.5" y="12" width="2" height="1"/><rect x="11.5" y="12" width="2" height="1"/><rect x="14.5" y="12" width="2" height="1"/><rect x="8.5" y="14" width="2" height="1"/><rect x="11.5" y="14" width="2" height="1"/><rect x="14.5" y="14" width="2" height="1"/></g>
<rect x="20" y="22.5" width="15" height="12" rx="2" fill="#9098a8"/>
<rect x="18.5" y="21" width="15" height="12" rx="2" fill="url(#bub)" stroke="#000" stroke-width="1.3"/>
<g fill="#304070"><rect x="21" y="24.5" width="2" height="1"/><rect x="24" y="24.5" width="2" height="1"/><rect x="21" y="27" width="2" height="1"/><rect x="24" y="27" width="2" height="1"/><rect x="27" y="27" width="2" height="1"/><rect x="21" y="29.5" width="2" height="1"/><rect x="24" y="29.5" width="2" height="1"/><rect x="27" y="29.5" width="2" height="1"/></g>
</svg>

<!-- penguin -->
<svg class="a" style="left:307px;top:556px" width="42" height="42" viewBox="0 0 42 42">
<rect x="4" y="5" width="17" height="22" fill="#000"/>
<rect x="6" y="6.8" width="6.3" height="8" fill="#e01818"/><rect x="13.5" y="6.8" width="6" height="8" fill="#1828d0"/>
<rect x="6" y="16.5" width="6.3" height="8.3" fill="#f0f020"/><rect x="13.5" y="16.5" width="6" height="8.3" fill="#20c020"/>
<rect x="4" y="29.5" width="2" height="2" fill="#000"/><rect x="4" y="33" width="2" height="2" fill="#000"/><rect x="8" y="33" width="2" height="2" fill="#000"/>
<path d="M20.5 9 Q22 5.5 25.5 6 Q28.5 7 29 11 Q29.5 16 32 20 Q35 25 34.5 31 L31 34 L17 34 Q15.5 27 18.5 21 Q20.5 16 20.5 9 Z" fill="#000"/>
<path d="M19.5 21 Q21 16.5 23.5 16.5 Q27.5 17 29.5 23 Q31 29 28.5 33 L19 33 Q17 27 19.5 21 Z" fill="#fff"/>
<ellipse cx="22.5" cy="10.5" rx="1.6" ry="2" fill="#fff"/><ellipse cx="26" cy="10.5" rx="1.4" ry="2" fill="#fff"/>
<circle cx="23" cy="11" r="0.7" fill="#000"/><circle cx="25.6" cy="11" r="0.7" fill="#000"/>
<path d="M20.5 14 Q24 12 27.5 14 Q25 17 24 17 Q22.5 17 20.5 14 Z" fill="#f0c020" stroke="#000" stroke-width="0.6"/>
<path d="M11 31.5 L15.5 28 L21 30.5 L22 34.5 L16 36 Z" fill="#f0e020" stroke="#000" stroke-width="1.1" stroke-linejoin="round"/>
<path d="M28.5 30 L33.5 30 L36 33 L33 36 L28 34.5 Z" fill="#f0e020" stroke="#000" stroke-width="1.1" stroke-linejoin="round"/>
</svg>

<!-- separators -->
<div class="a" style="left:359px;top:558px;width:1px;height:38px;background:#6a6a6a"></div>
<div class="a" style="left:360px;top:558px;width:1px;height:38px;background:#fff"></div>
<div class="a" style="left:362px;top:558px;width:1px;height:38px;background:#6a6a6a"></div>
<div class="a" style="left:363px;top:558px;width:1px;height:38px;background:#fff"></div>

<!-- pager -->
<div class="a" style="left:364px;top:556px;width:29px;height:42px;background:#000"></div>
<div class="a" style="left:365px;top:557px;width:27px;height:19px;background:#fff"></div>
<div class="a" style="left:369px;top:560px;width:20px;height:14px;background:#5470a8"></div>
<div class="a" style="left:365px;top:578px;width:27px;height:19px;background:#4a4a4a"></div>
<div class="t" style="left:365px;top:583px;width:28px;text-align:center;color:#fff;font-weight:bold;font-size:13px">2</div>

<div class="a" style="left:394px;top:558px;width:1px;height:38px;background:#6a6a6a"></div>
<div class="a" style="left:395px;top:558px;width:1px;height:38px;background:#fff"></div>
<div class="a" style="left:397px;top:558px;width:1px;height:38px;background:#6a6a6a"></div>
<div class="a" style="left:398px;top:558px;width:1px;height:38px;background:#fff"></div>

<!-- tasks -->
<div class="a" style="left:399px;top:556px;width:181px;height:41px;background:#000"></div><div class="a" style="left:399px;top:597px;width:181px;height:1px;background:#f4f4f4"></div>
<div class="a" style="left:400px;top:557px;width:179px;height:19px;background:#b2b2b2"></div>
<div class="a" style="left:400px;top:576px;width:179px;height:20px;background:linear-gradient(#f4f4f4,#d4d4d4);border-top:1px solid #fff"></div>
<div class="t" style="left:425px;top:561px;color:#fff;letter-spacing:0.35px">Edit K Menu &#8211; KDE Men...</div>
<div class="t" style="left:425px;top:580px">(The GIMP)</div>
<svg class="a" style="left:403px;top:556px" width="22" height="22" viewBox="0 0 22 22">
<rect x="7.6" y="4.6" width="8.6" height="14.4" fill="#f4f4f4" stroke="#000" stroke-width="1.2"/>
<rect x="8.2" y="5.2" width="7.4" height="4.6" fill="#30c0b8"/>
<rect x="8.2" y="9.8" width="7.4" height="2" fill="#a8f0e8"/>
<rect x="14.8" y="6.6" width="4.6" height="7.6" fill="#40d0b8" stroke="#000" stroke-width="1.2"/>
<rect x="15.4" y="11.6" width="3.4" height="2" fill="#d0fff0"/>
<path d="M4.6 10.8 L11.2 15.6" stroke="#000" stroke-width="3.2" stroke-linecap="round"/>
<path d="M4.9 11 L10.8 15.3" stroke="#f0c890" stroke-width="1.5" stroke-linecap="round"/>
</svg>
<svg class="a" style="left:403px;top:577px" width="22" height="20" viewBox="0 0 22 20">
<path d="M3 10.5 Q4 8.5 6.5 8.5 L7 6 L9 6.5 L9.5 8.3 Q12 8 14 7.5 L17 5.5 L19 4.8 L18.5 7 Q16.5 10.5 14 12 Q12 14.5 8.5 14.8 Q5 14.5 3 10.5 Z" fill="#5a5a58" stroke="#303030" stroke-width="0.7"/>
<circle cx="10.2" cy="10.2" r="1.5" fill="#f0f0f0"/><circle cx="10.6" cy="10.4" r="0.7" fill="#000"/>
</svg>

<!-- tray -->
<div class="a" style="left:580px;top:556px;width:74px;height:42px;background:#dcdcdc;border-top:1px solid #909090;border-right:1px solid #fff"></div>
<div class="a" style="left:657px;top:558px;width:1px;height:38px;background:#6a6a6a"></div>
<div class="a" style="left:658px;top:558px;width:1px;height:38px;background:#fff"></div>
<div class="a" style="left:660px;top:558px;width:1px;height:38px;background:#6a6a6a"></div>
<div class="a" style="left:661px;top:558px;width:1px;height:38px;background:#fff"></div>
<div class="a" style="left:662px;top:556px;width:52px;height:42px;border-top:1px solid #606060;border-left:1px solid #606060;border-right:1px solid #fff"></div>
<svg class="a" style="left:663px;top:566px" width="22" height="22" viewBox="0 0 22 22">
<defs><radialGradient id="cdt" cx="0.5" cy="0.55" r="0.55"><stop offset="0" stop-color="#e8f0f0"/><stop offset="0.3" stop-color="#90a8b0"/><stop offset="0.7" stop-color="#3a7080"/><stop offset="1" stop-color="#205060"/></radialGradient></defs>
<circle cx="11" cy="11" r="9.6" fill="url(#cdt)"/>
<path d="M2.5 5.5 L19.5 5.5 L19.5 7.5 L17 9.5 L13.5 9.5 L12 8 L10 8 L8.5 9.5 L5 9.5 L2.5 7.5 Z" fill="#000"/>
<rect x="9.5" y="9" width="3" height="7" fill="#f0f0f0"/>
<rect x="8.5" y="15" width="5" height="2" fill="#c8c8c8"/>
</svg>
<svg class="a" style="left:690px;top:566px" width="21" height="22" viewBox="0 0 21 22">
<rect x="1.5" y="2" width="18" height="19" rx="1.5" fill="#f08020" stroke="#000" stroke-width="1"/>
<rect x="4" y="4" width="13" height="15" fill="#fff" stroke="#000" stroke-width="0.8"/>
<path d="M7 1 L14 1 L13 4 L8 4 Z" fill="#c0c0c0" stroke="#000" stroke-width="0.6"/>
<rect x="7" y="6" width="7" height="1" fill="#000"/><rect x="7" y="8" width="7" height="1" fill="#000"/>
<path d="M8 10 L8 16 M8 13 L12 10 M9 12.5 L12.5 16" stroke="#000" stroke-width="1.2" fill="none"/>
</svg>
<div class="a" style="left:716px;top:558px;width:1px;height:38px;background:#6a6a6a"></div>
<div class="a" style="left:717px;top:558px;width:1px;height:38px;background:#fff"></div>
<div class="a" style="left:719px;top:558px;width:1px;height:38px;background:#6a6a6a"></div>
<div class="a" style="left:720px;top:558px;width:1px;height:38px;background:#fff"></div>

<!-- clock -->
<div class="a" style="left:721px;top:556px;width:68px;height:42px;border-top:1px solid #606060;border-left:1px solid #606060"></div>
<svg class="a" style="left:722px;top:566px" width="66" height="24" viewBox="0 0 66 24">
<g fill="#a8a8a8" transform="translate(1.2,1.2)"><path fill-rule="evenodd" d="M3 0 h10 v21 h-10 Z M5.8 3 v15 h4.4 v-15 Z"/><path fill-rule="evenodd" d="M14.8 0 h10.3 v21 h-10.3 v-3 h7.5 v-6.5 h-7.5 Z M17.6 3 v5.5 h4.7 v-5.5 Z"/><rect x="32" y="5" width="3" height="3"/><rect x="32" y="15" width="3" height="3"/><path d="M39 1 L41.7 2.5 L41.7 8.5 L46.3 8.5 L46.3 2.5 L49 1 L49 20 L46.3 18.5 L46.3 11.3 L39 11.3 Z"/><path fill-rule="evenodd" d="M51.3 0 h10 v21 h-10 Z M54.099999999999994 3 v15 h4.4 v-15 Z"/></g>
<g fill="#000"><path fill-rule="evenodd" d="M3 0 h10 v21 h-10 Z M5.8 3 v15 h4.4 v-15 Z"/><path fill-rule="evenodd" d="M14.8 0 h10.3 v21 h-10.3 v-3 h7.5 v-6.5 h-7.5 Z M17.6 3 v5.5 h4.7 v-5.5 Z"/><rect x="32" y="5" width="3" height="3"/><rect x="32" y="15" width="3" height="3"/><path d="M39 1 L41.7 2.5 L41.7 8.5 L46.3 8.5 L46.3 2.5 L49 1 L49 20 L46.3 18.5 L46.3 11.3 L39 11.3 Z"/><path fill-rule="evenodd" d="M51.3 0 h10 v21 h-10 Z M54.099999999999994 3 v15 h4.4 v-15 Z"/></g>
<path d="M3 9.3 L5.8 10.5 L3 11.7 Z M13 9.3 L10.2 10.5 L13 11.7 Z" fill="#dcdcdc"/><path d="M51.3 9.3 L54.099999999999994 10.5 L51.3 11.7 Z M61.3 9.3 L58.5 10.5 L61.3 11.7 Z" fill="#dcdcdc"/><path d="M14.8 11.5 L17.6 14.5 L14.8 17.5 Z" fill="#dcdcdc"/>
</svg>

</body></html>
